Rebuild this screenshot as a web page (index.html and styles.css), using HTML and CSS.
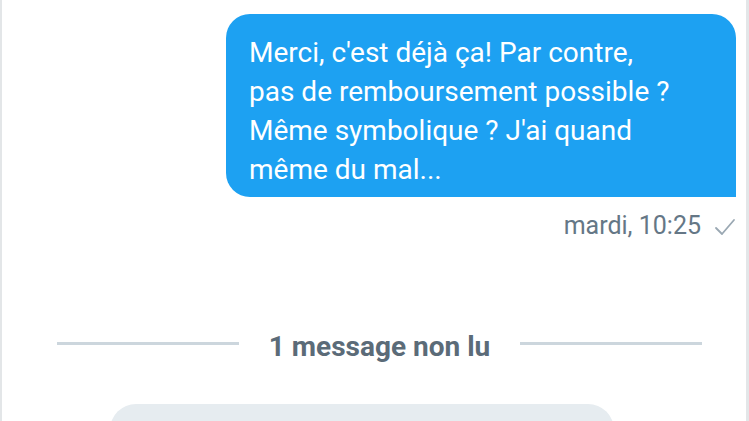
FILE: index.html
```html
<!DOCTYPE html>
<html lang="fr">
<head>
<meta charset="utf-8">
<link rel="stylesheet" href="styles.css">
</head>
<body>
<div class="frame">
  <div class="sent">
    <div class="bubble">Merci, c'est déjà ça! Par contre,<br>pas de remboursement possible ?<br>Même symbolique ? J'ai quand<br>même du mal...</div>
    <div class="meta"><span>mardi, 10:25</span>
      <svg class="check" width="22" height="18" viewBox="0 0 22 18"><path d="M2 10 L8 16 L20 2" fill="none" stroke="#9aa8b3" stroke-width="1.8" stroke-linecap="round" stroke-linejoin="round"/></svg>
    </div>
  </div>
  <div class="divider">
    <span class="line"></span>
    <span class="label">1 message non lu</span>
    <span class="line"></span>
  </div>
  <div class="received"><div class="rbubble"></div></div>
</div>
</body>
</html>
```
FILE: styles.css
```css
html, body {
  margin: 0;
  padding: 0;
  background: #fff;
  height: 100%;
  overflow: hidden;
}
.frame {
  height: 421px;
  box-sizing: border-box;
  border-left: 2px solid #e3e6e8;
  border-right: 3px solid #e3e6e8;
  font-family: Roboto, "Liberation Sans", sans-serif;
  padding-top: 14px;
  overflow: hidden;
}
.sent {
  display: flex;
  flex-direction: column;
  align-items: flex-end;
  padding-right: 10px;
}
.bubble {
  width: 510px;
  box-sizing: border-box;
  background: #1da1f2;
  color: #fff;
  font-size: 28px;
  line-height: 39px;
  padding: 19px 10px 8px 23px;
  border-radius: 24px 24px 0 24px;
}
.meta {
  display: flex;
  align-items: center;
  gap: 13px;
  margin-top: 14px;
  color: #657786;
  font-size: 25px;
  line-height: 29px;
}
.check {
  margin-top: 2px;
}
.divider {
  display: flex;
  align-items: center;
  margin-top: 84px;
  padding: 0 44px 0 55px;
  gap: 30px;
  line-height: 33px;
}
.line {
  flex: 1;
  height: 3px;
  background: #ccd6dd;
}
.label {
  padding-top: 6px;
  color: #5b6b78;
  font-weight: bold;
  font-size: 28px;
}
.received {
  margin-top: 41px;
  padding-left: 108px;
}
.rbubble {
  width: 504px;
  height: 60px;
  background: #e6ecf0;
  border-radius: 26px 26px 26px 0;
}
```
